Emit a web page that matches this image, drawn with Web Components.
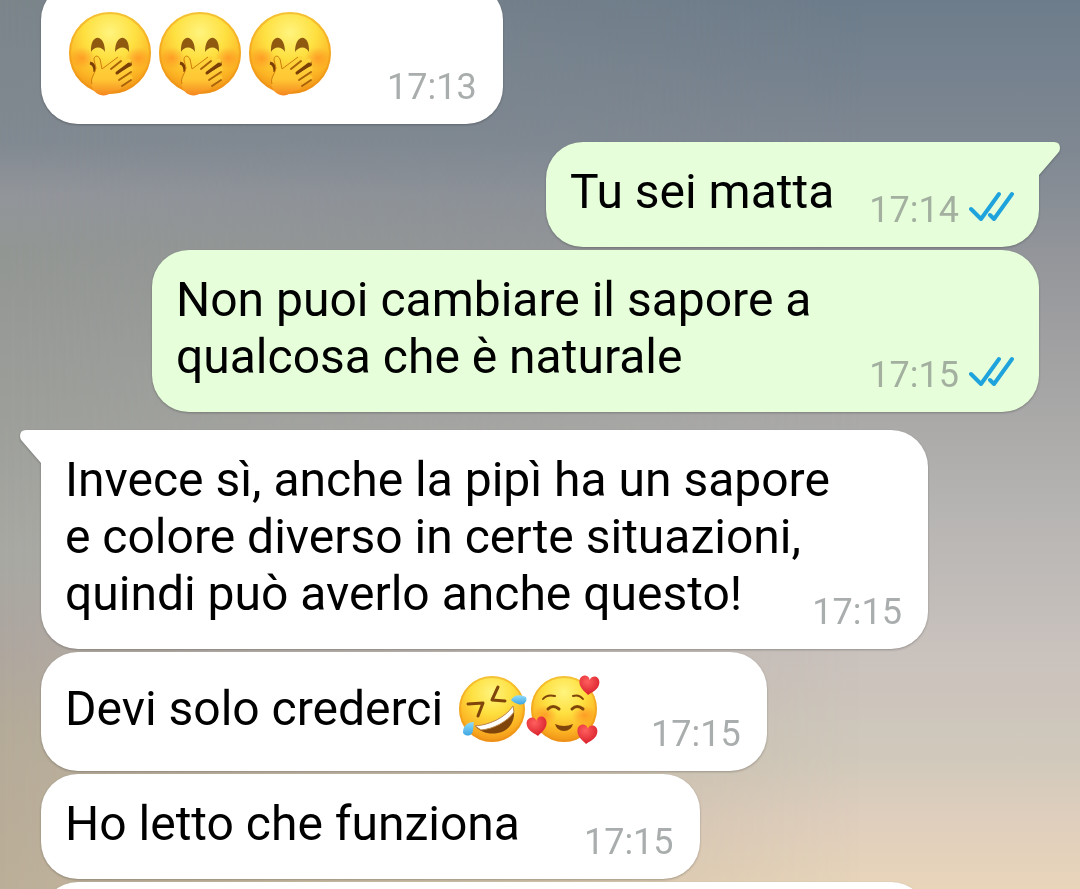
<!DOCTYPE html>
<html lang="it">
<head>
<meta charset="utf-8">
<meta name="viewport" content="width=device-width, initial-scale=1">
<title>Chat</title>
<style>
  html, body {
    margin: 0;
    height: 100%;
  }

  body {
    font-family: Roboto, "Noto Sans", sans-serif;
    color: #000;
    overflow: hidden;
  }
</style>
</head>
<body>
<chat-thread>
  <chat-message time="17:13" emoji><emoji-face name="giggle" size="large"></emoji-face><emoji-face name="giggle" size="large"></emoji-face><emoji-face name="giggle" size="large"></emoji-face></chat-message>
  <chat-message time="17:14" out tail>Tu sei matta</chat-message>
  <chat-message time="17:15" out long>Non puoi cambiare il sapore a qualcosa che è naturale</chat-message>
  <chat-message time="17:15" long tail>Invece sì, anche la pipì ha un sapore e colore diverso in certe situazioni, quindi può averlo anche questo!</chat-message>
  <chat-message time="17:15" emoji>Devi solo crederci <emoji-face name="rofl"></emoji-face><emoji-face name="hearts"></emoji-face></chat-message>
  <chat-message time="17:15">Ho letto che funziona</chat-message>
  <chat-message long></chat-message>
</chat-thread>

<script>
const HEART = "M0 9C-5 5-10 2-10-4C-10-8-7-10-4-10C-2-10 0-8 0-6C1-9 3-10 5-10C8-10 10-7 10-4C10 2 5 5 0 9Z";

const FACES = {
  giggle: {
    title: "Faccina con mano sulla bocca",
    box: "0 0 90 93",
    art: `
      <circle cx="45" cy="49" r="41" fill="url(#skin)"/>
      <circle cx="45" cy="49" r="40" fill="none" stroke="#e98b12" stroke-opacity=".4" stroke-width="2"/>
      <ellipse cx="17" cy="54" rx="13" ry="11" fill="url(#blush)"/>
      <ellipse cx="73" cy="54" rx="13" ry="11" fill="url(#blush)"/>
      <path d="M26 48C25 29 40 29 40 48C37 42 29 42 26 48ZM50 48C50 29 65 29 64 48C61 42 54 42 50 48Z" fill="#8f5a10"/>
      <path d="M25 59Q30 60 30 68" fill="none" stroke="#7a3f07" stroke-width="3"/>
      <path d="M50 66L66 57L67 61L56 71Z" fill="#7a3f07"/>
      <path d="M27 82C25 74 30 70 31 64L29 56C29 51 33 51 35 55L38 64L53 53C57 51 59 54 56 57L49 64L62 55C66 54 67 57 65 60L54 69L64 63C68 62 69 66 66 68L57 75L64 71C68 71 69 75 65 77L57 83C54 87 49 86 46 89C39 94 29 91 27 82Z" fill="url(#hand)"/>
      <path d="M27 80C25 74 30 70 31 64L29 56C29 51 33 51 35 55L37 65L53 53" fill="none" stroke="#cf7d0c" stroke-width="1"/>
      <path d="M46 65L56 57" fill="none" stroke="#a8620a" stroke-width="2" stroke-linecap="round"/>
      <path d="M52 69L64 60" fill="none" stroke="#7a3f07" stroke-width="3" stroke-linecap="round"/>
      <path d="M54 76L66 68M57 82L66 76" fill="none" stroke="#a8620a" stroke-width="2" stroke-linecap="round"/>`
  },
  rofl: {
    title: "Faccina che si rotola dal ridere",
    box: "0 0 72 71",
    art: `
      <circle cx="37" cy="36" r="33" fill="url(#skin)"/>
      <circle cx="37" cy="36" r="32" fill="none" stroke="#e98b12" stroke-opacity=".4" stroke-width="2"/>
      <path d="M13 31L28 30L23 43M43 14L37 27L50 28" fill="none" stroke="#80450a" stroke-width="3" stroke-linecap="round" stroke-linejoin="round"/>
      <path d="M20 53C34 52 50 45 58 33C62 46 55 58 43 60C34 62 25 59 20 53Z" fill="#80450a"/>
      <path d="M20 53C34 52 50 45 58 33L59 39C52 49 38 56 26 57Z" fill="#fff" stroke="#bf8a4c" stroke-width="1"/>
      <path d="M56 27C59 22 64 21 71 24C73 29 68 33 63 31C60 30 58 29 56 27Z" fill="url(#tear)"/>
      <path d="M19 49C12 49 8 53 8 60C12 65 18 62 18 57C19 54 18 51 19 49Z" fill="url(#tear)"/>`
  },
  hearts: {
    title: "Faccina innamorata con cuori",
    box: "0 0 72 71",
    art: `
      <circle cx="37" cy="36" r="33" fill="url(#skin)"/>
      <circle cx="37" cy="36" r="32" fill="none" stroke="#e98b12" stroke-opacity=".4" stroke-width="2"/>
      <ellipse cx="18" cy="42" rx="12" ry="10" fill="url(#blush)"/>
      <ellipse cx="57" cy="42" rx="12" ry="10" fill="url(#blush)"/>
      <path d="M16 26Q20 21 28 23M46 23Q52 21 56 26" fill="none" stroke="#80450a" stroke-width="2" stroke-linecap="round"/>
      <path d="M21 36Q26 31 32 36M45 36Q50 31 56 36" fill="none" stroke="#80450a" stroke-width="3" stroke-linecap="round"/>
      <path d="M28 51Q37 55 46 51Q44 58 37 58Q30 58 28 51Z" fill="#80450a"/>
      <path d="${HEART}" transform="translate(62 13) rotate(6)" fill="url(#heart)"/>
      <path d="${HEART}" transform="translate(10 54) rotate(-6)" fill="url(#heart)"/>
      <path d="${HEART}" transform="translate(60 62) rotate(6)" fill="url(#heart)"/>`
  }
};

class EmojiFace extends HTMLElement {
  constructor() {
    super();
    this.attachShadow({ mode: "open" });
  }

  connectedCallback() {
    const face = FACES[this.getAttribute("name")];
    this.shadowRoot.innerHTML = `
      <style>
        :host {
          display: inline-block;
          width: 72px;
          height: 71px;
          vertical-align: -19px;
        }

        :host([size="large"]) {
          width: 90px;
          height: 93px;
          vertical-align: top;
        }

        svg {
          display: block;
          width: 100%;
          height: 100%;
          overflow: visible;
        }
      </style>
      <svg viewBox="${face.box}" role="img" aria-label="${face.title}">
        <defs>
          <radialGradient id="skin" cx=".5" cy=".25" r=".78">
            <stop offset="0" stop-color="#fff47e"/>
            <stop offset=".4" stop-color="#fee041"/>
            <stop offset=".75" stop-color="#fcb524"/>
            <stop offset="1" stop-color="#ee8a15"/>
          </radialGradient>
          <radialGradient id="blush">
            <stop offset="0" stop-color="#ff7a1c" stop-opacity=".55"/>
            <stop offset="1" stop-color="#ff7a1c" stop-opacity="0"/>
          </radialGradient>
          <linearGradient id="hand" x1="0" y1="0" x2="0" y2="1">
            <stop offset="0" stop-color="#ffd63c"/>
            <stop offset=".6" stop-color="#ffc634"/>
            <stop offset="1" stop-color="#f5861f"/>
          </linearGradient>
          <linearGradient id="tear" x1="0" y1="0" x2="0" y2="1">
            <stop offset="0" stop-color="#8fdcfa"/>
            <stop offset="1" stop-color="#3fa6e0"/>
          </linearGradient>
          <radialGradient id="heart" cx=".4" cy=".3" r=".7">
            <stop offset="0" stop-color="#ff5f5f"/>
            <stop offset="1" stop-color="#d9202b"/>
          </radialGradient>
        </defs>
        ${face.art}
      </svg>`;
  }
}

class ChatMessage extends HTMLElement {
  constructor() {
    super();
    this.attachShadow({ mode: "open" });
  }

  connectedCallback() {
    const out = this.hasAttribute("out");
    const time = this.getAttribute("time");

    this.shadowRoot.innerHTML = `
      <style>
        :host {
          --bubble: #fff;
          --meta-gap: 64px;
          --pad-end: 26px;
          display: block;
          align-self: flex-start;
          box-sizing: border-box;
          max-width: 100%;
          margin-top: 3px;
          filter: drop-shadow(0 1px 1px rgba(0, 0, 0, .25));
        }

        :host([out]) {
          --bubble: #e6ffda;
          --meta-gap: 35px;
          --pad-end: 25px;
          align-self: flex-end;
        }

        :host([emoji]) {
          --meta-gap: 52px;
        }

        :host([tail]) {
          margin-top: 18px;
        }

        :host([long]) {
          width: 887px;
        }

        .bubble {
          position: relative;
          display: flex;
          align-items: flex-end;
          gap: var(--meta-gap);
          min-height: 105px;
          box-sizing: border-box;
          padding: 21px var(--pad-end) 16px 24px;
          border-radius: 37px;
          background: var(--bubble);
        }

        .text {
          margin: 0 0 11px;
          font-size: 48px;
          line-height: 57px;
        }

        .meta {
          display: flex;
          align-items: flex-start;
          gap: 10px;
          font-size: 36px;
          line-height: 42px;
          color: #a9adad;
        }

        :host([out]) .meta {
          color: #a3b0a0;
        }

        /* long texts run above the time instead of beside it */
        :host([long]) .bubble {
          display: grid;
        }

        :host([long]) .text,
        :host([long]) .meta {
          grid-area: 1 / 1;
        }

        :host([long]) .text {
          max-width: 780px;
        }

        :host([long]) .meta {
          justify-self: end;
        }

        .ticks {
          width: 45px;
          height: 32px;
        }

        .tail {
          position: absolute;
          top: 0;
          left: -21px;
          width: 22px;
          height: 34px;
          fill: var(--bubble);
          transform: scaleX(-1);
        }

        :host([out]) .tail {
          left: auto;
          right: -21px;
          transform: none;
        }

        :host([tail]) .bubble {
          border-top-left-radius: 0;
        }

        :host([tail][out]) .bubble {
          border-radius: 37px 0 37px 37px;
        }
      </style>
      <article class="bubble">
        ${this.hasAttribute("tail") ? `<svg class="tail" viewBox="0 0 22 34" aria-hidden="true"><path d="M0 0H16Q22 0 22 6Q22 9 20 11L1 33V34H0Z"/></svg>` : ""}
        <p class="text"><slot></slot></p>
        ${time ? `<div class="meta"><time>${time}</time>${out ? this.ticks() : ""}</div>` : ""}
      </article>`;
  }

  ticks() {
    return `<svg class="ticks" viewBox="0 0 45 32" role="img" aria-label="Letto" fill="none" stroke="#1fa3dc" stroke-width="4" stroke-linecap="round" stroke-linejoin="round">
      <path d="M2 20L12 30L30 5M21 26L25 30L43 5"/>
    </svg>`;
  }
}

class ChatThread extends HTMLElement {
  constructor() {
    super();
    this.attachShadow({ mode: "open" }).innerHTML = `
      <style>
        :host {
          display: block;
          position: relative;
          height: 100%;
          overflow: hidden;
          background: linear-gradient(#6d7c8b, #7f8892 17%, #97989c 31%, #abaaa9 48%, #b7b5b3 58%, #cac2bd 74%, #d0c9bb 85%, #dfcebd 92%, #e8d5ba);
        }

        /* darker left side of the sky */
        :host::before {
          content: "";
          position: absolute;
          inset: 0;
          background: linear-gradient(#7b858a, #818991 16%, #92959a 22%, #929693 28%, #9d9f9a 48%, #a7a8a2 62%, #ada69f 72%, #b4aa98 82%, #bbae98);
          -webkit-mask-image: linear-gradient(to right, #000, transparent 80%);
          mask-image: linear-gradient(to right, #000, transparent 80%);
        }

        /* scrolled: the first bubble is partly above the window */
        main {
          position: relative;
          display: flex;
          flex-direction: column;
          margin-top: -20px;
          padding: 0 41px;
        }
      </style>
      <main><slot></slot></main>`;
  }
}

customElements.define("emoji-face", EmojiFace);
customElements.define("chat-message", ChatMessage);
customElements.define("chat-thread", ChatThread);
</script>
</body>
</html>
